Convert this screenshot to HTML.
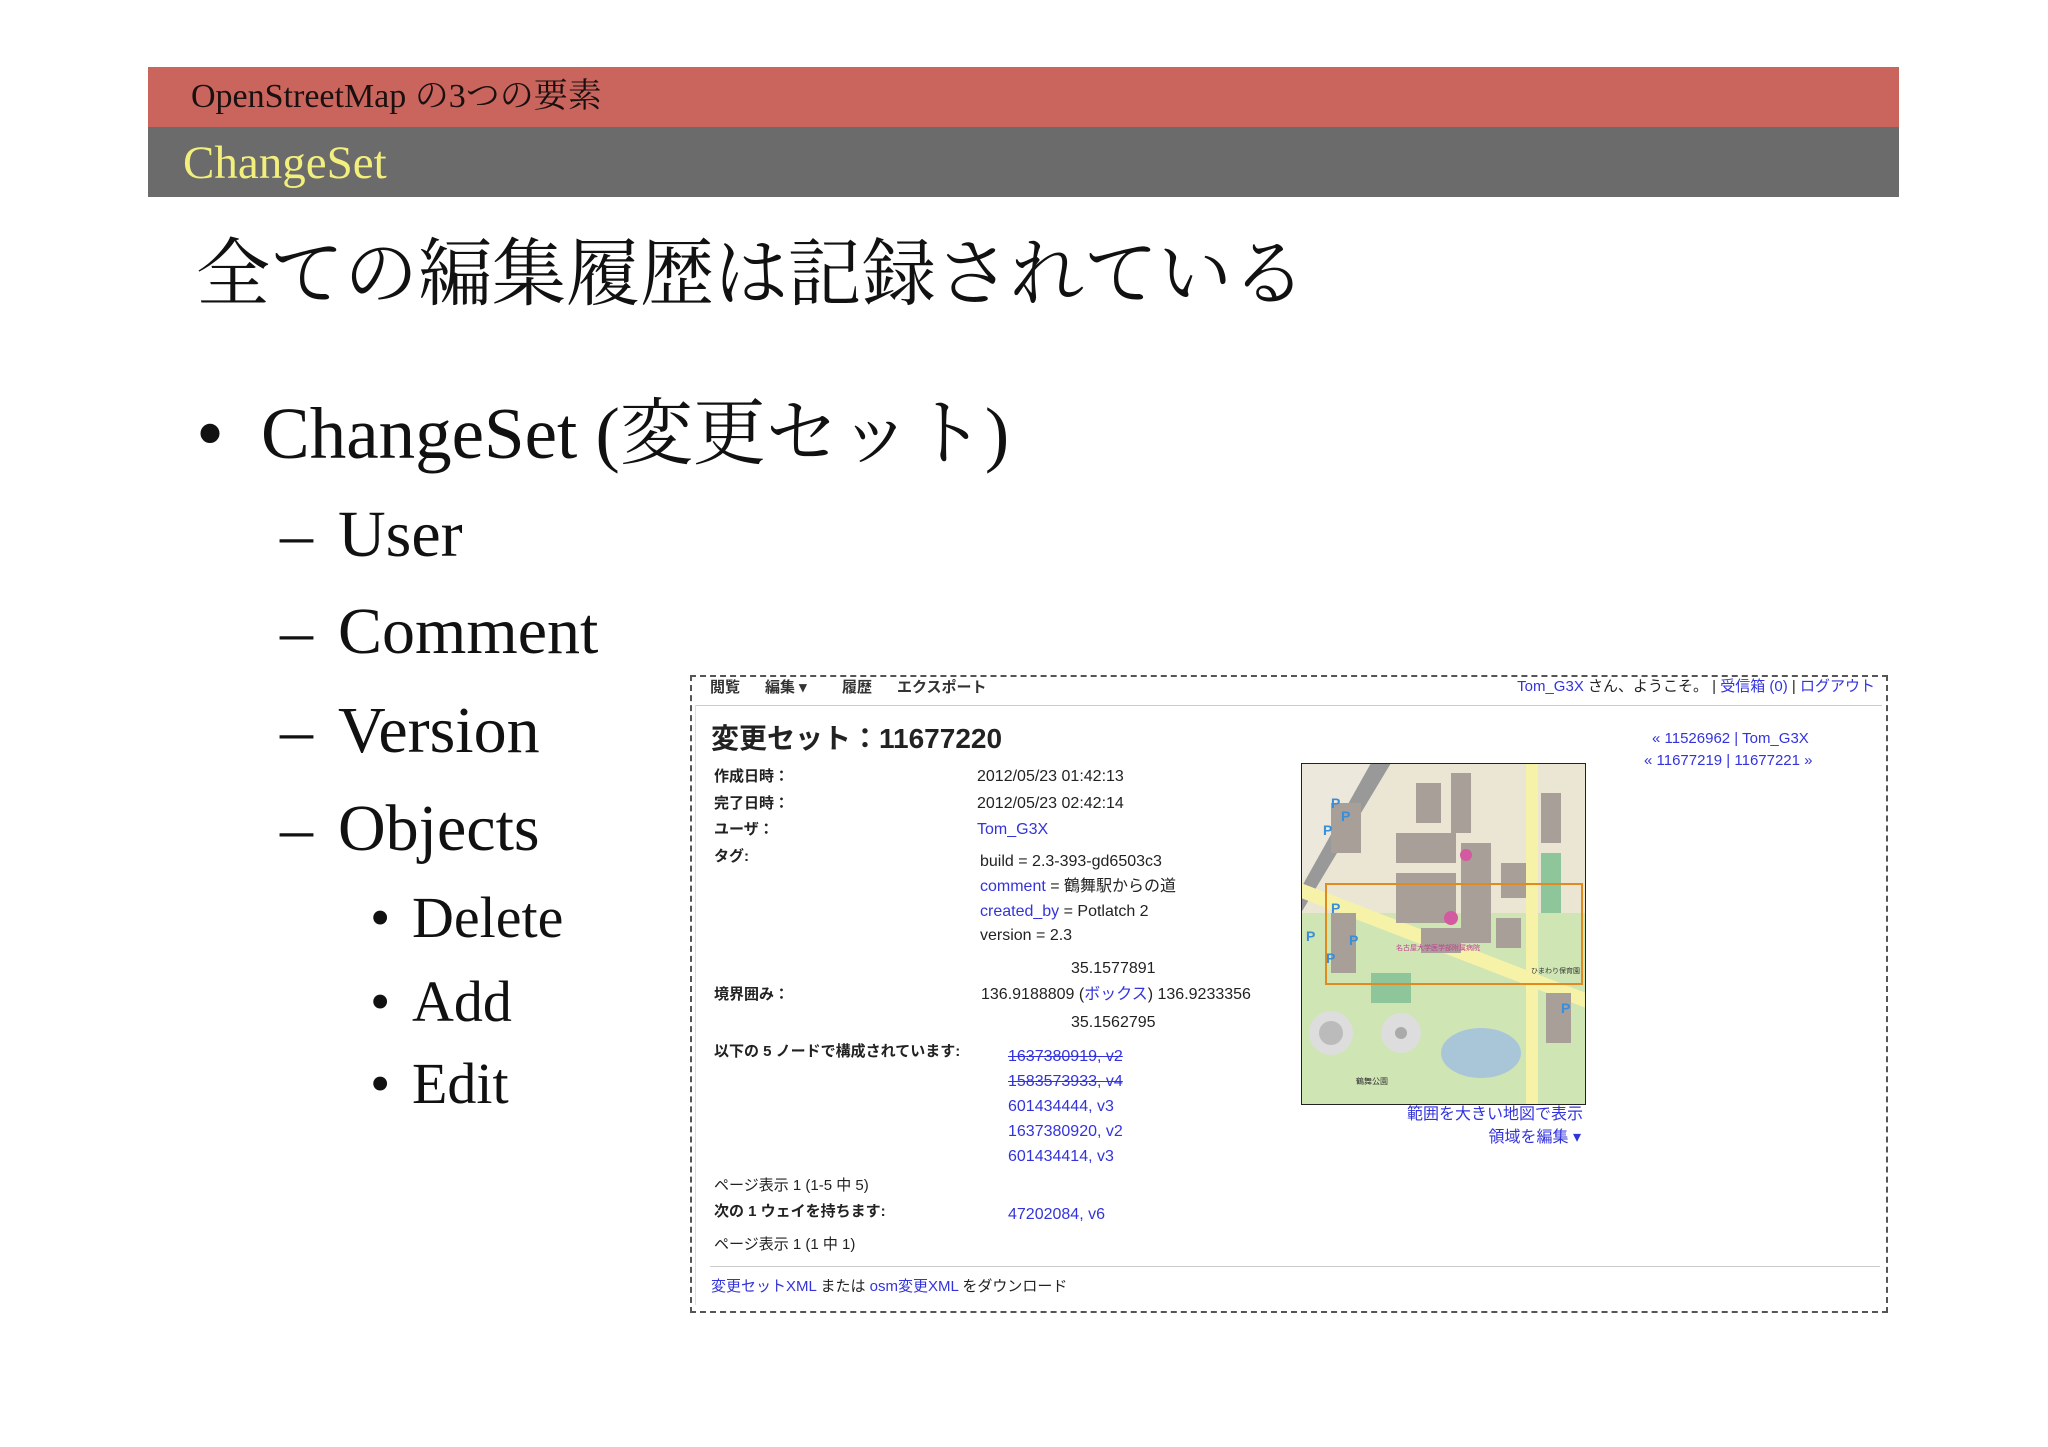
<!DOCTYPE html>
<html><head><meta charset="utf-8">
<style>
*{margin:0;padding:0;box-sizing:border-box}
body{width:2048px;height:1447px;background:#fff;position:relative;overflow:hidden;font-family:"Liberation Serif","Noto Serif CJK JP",serif;color:#111}
.a{position:absolute;white-space:nowrap}
.s{font-family:"Liberation Sans","Noto Sans CJK JP",sans-serif;color:#222;font-size:16px;line-height:20px}
.b{font-weight:bold}
.l{color:#3333dd}
</style></head><body>
<div class="a" style="left:148px;top:67px;width:1751px;height:60px;background:#c9655d"></div>
<div class="a" style="left:148px;top:127px;width:1751px;height:70px;background:#6b6b6b"></div>
<div class="a" style="left:191px;top:76px;font-size:34px;line-height:42px;color:#1a1010">OpenStreetMap の3つの要素</div>
<div class="a" style="left:183px;top:135px;font-size:47px;line-height:56px;color:#f3ef7c">ChangeSet</div>
<div class="a" style="left:196px;top:230px;font-size:74px;line-height:90px;color:#111">全ての編集履歴は記録されている</div>
<div class="a" style="left:196px;top:384px;font-size:80px;line-height:100px">•</div>
<div class="a" style="left:261px;top:386px;font-size:73px;line-height:96px">ChangeSet (変更セット)</div>
<div class="a" style="left:280px;top:495px;font-size:66px;line-height:80px">–</div>
<div class="a" style="left:338px;top:495px;font-size:66px;line-height:80px">User</div>
<div class="a" style="left:280px;top:592px;font-size:66px;line-height:80px">–</div>
<div class="a" style="left:338px;top:592px;font-size:66px;line-height:80px">Comment</div>
<div class="a" style="left:280px;top:691px;font-size:66px;line-height:80px">–</div>
<div class="a" style="left:338px;top:691px;font-size:66px;line-height:80px">Version</div>
<div class="a" style="left:280px;top:789px;font-size:66px;line-height:80px">–</div>
<div class="a" style="left:338px;top:789px;font-size:66px;line-height:80px">Objects</div>
<div class="a" style="left:370px;top:883px;font-size:58px;line-height:70px">•</div>
<div class="a" style="left:412px;top:883px;font-size:58px;line-height:70px">Delete</div>
<div class="a" style="left:370px;top:967px;font-size:58px;line-height:70px">•</div>
<div class="a" style="left:412px;top:967px;font-size:58px;line-height:70px">Add</div>
<div class="a" style="left:370px;top:1049px;font-size:58px;line-height:70px">•</div>
<div class="a" style="left:412px;top:1049px;font-size:58px;line-height:70px">Edit</div>

<!-- screenshot -->
<div class="a" style="left:690px;top:675px;width:1198px;height:638px;border:2px dashed #555"></div>
<div class="a" style="left:696px;top:705px;width:1186px;height:1px;background:#ccc"></div>
<div class="a" style="left:695px;top:705px;width:1px;height:600px;background:#ddd"></div>
<div class="a s b" style="left:710px;top:678px;font-size:15px;color:#333">閲覧</div>
<div class="a s b" style="left:765px;top:678px;font-size:15px;color:#333">編集 ▾</div>
<div class="a s b" style="left:842px;top:678px;font-size:15px;color:#333">履歴</div>
<div class="a s b" style="left:897px;top:678px;font-size:15px;color:#333">エクスポート</div>
<div class="a s" style="right:173px;top:677px;font-size:15px"><span class="l">Tom_G3X</span> さん、ようこそ。 | <span class="l">受信箱 (0)</span> | <span class="l">ログアウト</span></div>
<div class="a s b" style="left:711px;top:722px;font-size:28px;line-height:34px;color:#222">変更セット：11677220</div>
<div class="a s b" style="left:714px;top:767px;font-size:15px">作成日時：</div>
<div class="a s b" style="left:714px;top:794px;font-size:15px">完了日時：</div>
<div class="a s b" style="left:714px;top:820px;font-size:15px">ユーザ：</div>
<div class="a s b" style="left:714px;top:847px;font-size:15px">タグ:</div>
<div class="a s" style="left:977px;top:767px">2012/05/23 01:42:13</div>
<div class="a s" style="left:977px;top:794px">2012/05/23 02:42:14</div>
<div class="a s l" style="left:977px;top:820px">Tom_G3X</div>
<div class="a s" style="left:980px;top:852px">build = 2.3-393-gd6503c3</div>
<div class="a s" style="left:980px;top:877px"><span class="l">comment</span> = 鶴舞駅からの道</div>
<div class="a s" style="left:980px;top:902px"><span class="l">created_by</span> = Potlatch 2</div>
<div class="a s" style="left:980px;top:926px">version = 2.3</div>
<div class="a s" style="left:1071px;top:959px">35.1577891</div>
<div class="a s b" style="left:714px;top:985px;font-size:15px">境界囲み：</div>
<div class="a s" style="left:981px;top:985px">136.9188809 (<span class="l">ボックス</span>) 136.9233356</div>
<div class="a s" style="left:1071px;top:1013px">35.1562795</div>
<div class="a s b" style="left:714px;top:1042px;font-size:15px">以下の 5 ノードで構成されています:</div>
<div class="a s l" style="left:1008px;top:1047px;text-decoration:line-through">1637380919, v2</div>
<div class="a s l" style="left:1008px;top:1072px;text-decoration:line-through">1583573933, v4</div>
<div class="a s l" style="left:1008px;top:1097px">601434444, v3</div>
<div class="a s l" style="left:1008px;top:1122px">1637380920, v2</div>
<div class="a s l" style="left:1008px;top:1147px">601434414, v3</div>
<div class="a s" style="left:714px;top:1176px;font-size:15px">ページ表示 1 (1-5 中 5)</div>
<div class="a s b" style="left:714px;top:1202px;font-size:15px">次の 1 ウェイを持ちます:</div>
<div class="a s l" style="left:1008px;top:1205px">47202084, v6</div>
<div class="a s" style="left:714px;top:1235px;font-size:15px">ページ表示 1 (1 中 1)</div>
<div class="a" style="left:710px;top:1266px;width:1170px;height:1px;background:#ccc"></div>
<div class="a s" style="left:711px;top:1277px;font-size:15px"><span class="l">変更セットXML</span> または <span class="l">osm変更XML</span> をダウンロード</div>
<div class="a s l" style="left:1652px;top:729px;font-size:15px">« 11526962 | Tom_G3X</div>
<div class="a s l" style="left:1644px;top:751px;font-size:15px">« 11677219 | 11677221 »</div>
<div class="a s l" style="right:465px;top:1105px;font-size:16px">範囲を大きい地図で表示</div>
<div class="a s l" style="right:467px;top:1128px;font-size:16px">領域を編集 ▾</div>

<svg class="a" style="left:1301px;top:763px" width="285" height="342" viewBox="0 0 285 342">
<rect width="285" height="342" fill="#ebe6d4"/>
<polygon points="0,150 285,150 285,342 0,342" fill="#cfe5b4"/>
<polygon points="0,0 80,0 0,120" fill="#ece8dc"/>
<polygon points="70,0 90,0 0,150 0,125" fill="#999"/>
<polygon points="0,120 285,230 285,245 0,135" fill="#f6f2a8"/>
<rect x="225" y="0" width="12" height="342" fill="#f6f2a8"/>
<g fill="#a89f98">
<rect x="115" y="20" width="25" height="40"/><rect x="150" y="10" width="20" height="60"/><rect x="95" y="70" width="60" height="30"/>
<rect x="95" y="110" width="60" height="50"/><rect x="160" y="80" width="30" height="100"/><rect x="200" y="100" width="25" height="35"/>
<rect x="120" y="165" width="40" height="25"/><rect x="195" y="155" width="25" height="30"/><rect x="30" y="40" width="30" height="50"/>
<rect x="240" y="30" width="20" height="50"/><rect x="245" y="230" width="25" height="50"/><rect x="30" y="150" width="25" height="60"/>
</g>
<rect x="70" y="210" width="40" height="30" fill="#8fc59a"/>
<rect x="240" y="90" width="20" height="60" fill="#8fc59a"/>
<ellipse cx="180" cy="290" rx="40" ry="25" fill="#a9c6d8"/>
<circle cx="30" cy="270" r="22" fill="#ddd"/><circle cx="30" cy="270" r="12" fill="#bbb"/>
<circle cx="100" cy="270" r="20" fill="#ddd"/><circle cx="100" cy="270" r="6" fill="#aaa"/>
<circle cx="165" cy="92" r="6" fill="#d35aa0"/><circle cx="150" cy="155" r="7" fill="#d35aa0"/>
<rect x="25" y="121" width="256" height="100" fill="none" stroke="#e08a20" stroke-width="2"/>
<g fill="#3a8ed8" font-family="Liberation Sans" font-weight="bold" font-size="14"><text x="30" y="45">P</text><text x="40" y="58">P</text><text x="22" y="72">P</text><text x="30" y="150">P</text><text x="5" y="178">P</text><text x="48" y="182">P</text><text x="25" y="200">P</text><text x="260" y="250">P</text></g>
<text x="95" y="187" font-size="7" fill="#c04090" font-family="Noto Sans CJK JP">名古屋大学医学部附属病院</text>
<text x="230" y="210" font-size="7" fill="#333" font-family="Noto Sans CJK JP">ひまわり保育園</text>
<text x="55" y="321" font-size="8" fill="#333" font-family="Noto Sans CJK JP">鶴舞公園</text>
<rect x="0.5" y="0.5" width="284" height="341" fill="none" stroke="#222"/>
</svg>
</body></html>
